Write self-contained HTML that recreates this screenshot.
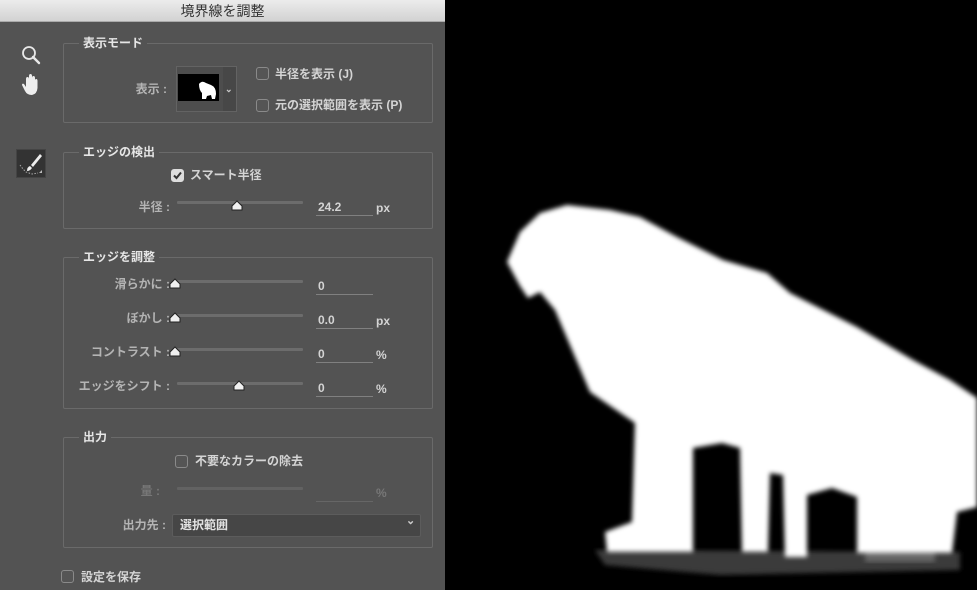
<!DOCTYPE html>
<html><head><meta charset="utf-8"><style>
*{margin:0;padding:0;box-sizing:border-box}
body{width:977px;height:590px;overflow:hidden;background:#000;position:relative;font-family:"Liberation Sans","Noto Sans CJK JP",sans-serif;font-size:12px;font-weight:bold}
#panel{position:absolute;left:0;top:0;width:445px;height:590px;background:#535353}
#title{position:absolute;left:0;top:0;width:445px;height:22px;background:linear-gradient(#ececec,#d2d2d2);border-bottom:1px solid #aaa;text-align:center;line-height:22px;font-size:14px;color:#333;font-weight:normal}
.box{position:absolute;border:1px solid #6a6a6a;border-radius:2px}
.gt{position:absolute;background:#535353;color:#e6e6e6;padding:0 4px;font-size:12px;line-height:14px}
.t{position:absolute;color:#d4d4d4;line-height:14px;white-space:nowrap}
.lbl{position:absolute;color:#b4b4b4;line-height:14px;white-space:nowrap;text-align:right}
.cb{position:absolute;width:13px;height:13px;border:1px solid #8a8a8a;border-radius:3px;background:#555}
.track{position:absolute;height:3px;background:#6c6c6c;border-radius:1px}
.thumb{position:absolute;width:12px;height:11px}
.inp{position:absolute;width:57px;border-bottom:1px solid #808080;color:#d4d4d4;line-height:16px;height:17px;padding-left:2px}
</style></head><body>
<div id="panel">
<div id="title">境界線を調整</div>
<svg style="position:absolute;left:20px;top:44px" width="22" height="60" viewBox="0 0 22 60">
<circle cx="9" cy="9" r="6" fill="none" stroke="#e8e8e8" stroke-width="1.8"/>
<line x1="13" y1="13" x2="19" y2="19" stroke="#e8e8e8" stroke-width="2.4" stroke-linecap="round"/>
<path d="M6 43 L6 35 Q6 33 7.5 33 Q9 33 9 35 L9 32 Q9 30 10.5 30 Q12 30 12 32 L12 34 Q12 32 13.5 32 Q15 32 15 34 L15 36 Q15 35 16.3 35 Q17.5 35 17.5 37 L17.5 44 Q17 50 12 51 Q7 51 5 47 L2 41 Q2 39 4 40 Z" fill="#eee"/>
</svg>
<div style="position:absolute;left:16px;top:149px;width:30px;height:29px;background:#333;border:1px solid #444"></div>
<svg style="position:absolute;left:16px;top:149px" width="30" height="29" viewBox="0 0 30 29">
<path d="M24 5 L15 16 L17 18 L26 7 Z" fill="#eee"/>
<path d="M14 17 Q11 18 11 22 Q14 22 16 19 Z" fill="#eee"/>
<path d="M4 16 L7 20 L10 23 L16 25 L22 24" fill="none" stroke="#aaa" stroke-width="1" stroke-dasharray="1.5 1.5"/>
<path d="M23 24 L26 21 L26 24 Z" fill="#bbb"/>
</svg>

<div class="box" style="left:63px;top:43px;width:370px;height:80px"></div>
<div class="gt" style="left:79px;top:36px">表示モード</div>
<div class="lbl" style="left:97px;top:82px;width:70px">表示 :</div>
<div style="position:absolute;left:176px;top:66px;width:61px;height:46px;border:1px solid #636363;background:#4d4d4d"></div>
<div style="position:absolute;left:178px;top:74px;width:41px;height:27px;background:#000"></div>
<svg style="position:absolute;left:178px;top:74px" width="41" height="27"><path d="M21 10 Q24 6 28 9 L33 11 Q38 13 38 20 L37 25 L34 25 L33 21 L29 22 L28 25 L24 25 L24 19 Q21 16 21 10Z" fill="#fff"/></svg>
<div style="position:absolute;left:223px;top:67px;width:13px;height:44px;background:#474747"></div>
<div class="t" style="left:225px;top:82px;font-size:9px;color:#ccc">⌄</div>
<div class="cb" style="left:256px;top:67px"></div>
<div class="t" style="left:275px;top:67px">半径を表示 (J)</div>
<div class="cb" style="left:256px;top:99px"></div>
<div class="t" style="left:275px;top:98px">元の選択範囲を表示 (P)</div>

<div class="box" style="left:63px;top:152px;width:370px;height:77px"></div>
<div class="gt" style="left:79px;top:145px">エッジの検出</div>
<div class="cb" style="left:171px;top:169px;background:#ddd;border-color:#ddd"></div>
<svg style="position:absolute;left:171px;top:169px" width="13" height="13"><path d="M3 6.5 L5.5 9 L10 3.5" fill="none" stroke="#333" stroke-width="2"/></svg>
<div class="t" style="left:190px;top:168px">スマート半径</div>
<div class="lbl" style="left:80px;top:200px;width:90px">半径 :</div>

<div class="box" style="left:63px;top:257px;width:370px;height:152px"></div>
<div class="gt" style="left:79px;top:250px">エッジを調整</div>
<div class="lbl" style="left:60px;top:277px;width:110px">滑らかに :</div>
<div class="lbl" style="left:60px;top:311px;width:110px">ぼかし :</div>
<div class="lbl" style="left:60px;top:345px;width:110px">コントラスト :</div>
<div class="lbl" style="left:60px;top:379px;width:110px">エッジをシフト :</div>

<div class="box" style="left:63px;top:437px;width:370px;height:111px"></div>
<div class="gt" style="left:79px;top:430px">出力</div>
<div class="cb" style="left:175px;top:455px"></div>
<div class="t" style="left:195px;top:454px">不要なカラーの除去</div>
<div class="lbl" style="left:80px;top:484px;width:80px;color:#777">量 :</div>
<div class="lbl" style="left:60px;top:518px;width:106px">出力先 :</div>
<div style="position:absolute;left:172px;top:514px;width:249px;height:23px;background:#464646;border:1px solid #5c5c5c;border-radius:2px"></div>
<div class="t" style="left:180px;top:518px;color:#e2e2e2">選択範囲</div>
<div class="t" style="left:406px;top:514px;color:#ccc;font-size:11px">⌄</div>

<div class="cb" style="left:61px;top:570px"></div>
<div class="t" style="left:81px;top:570px">設定を保存</div>

<div class="track" style="left:177px;top:201px;width:126px"></div>
<div class="track" style="left:177px;top:280px;width:126px"></div>
<div class="track" style="left:177px;top:314px;width:126px"></div>
<div class="track" style="left:177px;top:348px;width:126px"></div>
<div class="track" style="left:177px;top:382px;width:126px"></div>
<div class="track" style="left:177px;top:487px;width:126px;background:#626262"></div>
<svg class="thumb" style="left:231px;top:200px" viewBox="0 0 12 11"><path d="M6 1 L11 6 L11 10 L1 10 L1 6 Z" fill="#f0f0f0" stroke="#222" stroke-width="1"/></svg>
<svg class="thumb" style="left:169px;top:278px" viewBox="0 0 12 11"><path d="M6 1 L11 6 L11 10 L1 10 L1 6 Z" fill="#f0f0f0" stroke="#222" stroke-width="1"/></svg>
<svg class="thumb" style="left:169px;top:312px" viewBox="0 0 12 11"><path d="M6 1 L11 6 L11 10 L1 10 L1 6 Z" fill="#f0f0f0" stroke="#222" stroke-width="1"/></svg>
<svg class="thumb" style="left:169px;top:346px" viewBox="0 0 12 11"><path d="M6 1 L11 6 L11 10 L1 10 L1 6 Z" fill="#f0f0f0" stroke="#222" stroke-width="1"/></svg>
<svg class="thumb" style="left:233px;top:380px" viewBox="0 0 12 11"><path d="M6 1 L11 6 L11 10 L1 10 L1 6 Z" fill="#f0f0f0" stroke="#222" stroke-width="1"/></svg>

<div class="inp" style="left:316px;top:199px">24.2</div><div class="t" style="left:376px;top:201px">px</div>
<div class="inp" style="left:316px;top:278px">0</div>
<div class="inp" style="left:316px;top:312px">0.0</div><div class="t" style="left:376px;top:314px">px</div>
<div class="inp" style="left:316px;top:346px">0</div><div class="t" style="left:376px;top:348px">%</div>
<div class="inp" style="left:316px;top:380px">0</div><div class="t" style="left:376px;top:382px">%</div>
<div class="inp" style="left:316px;top:485px;border-color:#666"></div><div class="t" style="left:376px;top:486px;color:#777">%</div>
</div>

<svg style="position:absolute;left:445px;top:0" width="532" height="590" viewBox="445 0 532 590">
<defs><filter id="b"><feGaussianBlur stdDeviation="2.5"/></filter></defs>
<path d="M595 550 L960 552 L960 570 L720 575 L605 565 Z" fill="#3a3a3a" filter="url(#b)"/>
<path d="M865 550 L935 551 L935 562 L865 562Z" fill="#666" filter="url(#b)"/>
<polygon filter="url(#b)" fill="#fff" points="507,262 520,232 540,213 567,205 610,210 640,217 677,237 723,260 767,273 790,293 857,327 913,360 950,380 977,398 977,507 957,512 952,553 857,553 857,497 832,488 807,495 807,557 785,557 783,475 770,473 768,552 742,552 740,448 722,443 693,448 693,552 607,552 605,532 632,522 635,423 590,392 555,310 540,292 528,298 520,286"/>
</svg>
</body></html>
